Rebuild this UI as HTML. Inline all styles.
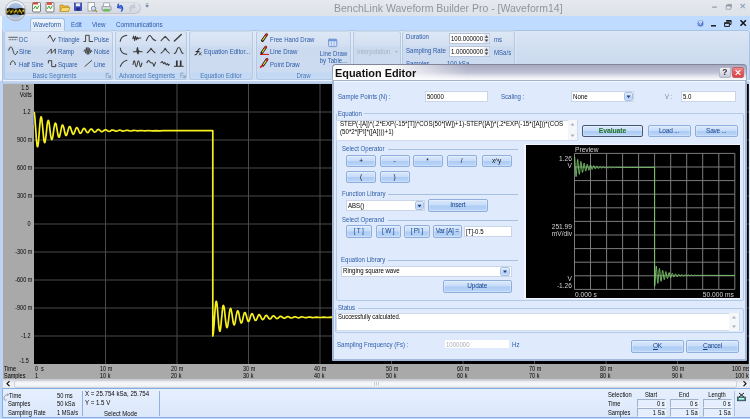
<!DOCTYPE html>
<html><head><meta charset="utf-8"><title>BenchLink Waveform Builder Pro</title>
<style>
html,body{margin:0;padding:0;background:#bfdbff;}
body{width:750px;height:419px;overflow:hidden;position:relative;font-family:"Liberation Sans",sans-serif;font-size:7.5px;color:#15428b;}
#app{position:absolute;left:0;top:0;width:750px;height:419px;overflow:hidden;filter:blur(.4px);}
.a{position:absolute;white-space:nowrap;line-height:1;}
.t{position:absolute;white-space:nowrap;line-height:9px;height:9px;}
.grp{position:absolute;top:31px;height:48.5px;border:1px solid #b4c9e4;border-radius:3px;background:linear-gradient(#dde7f5 0,#d3e0f2 13px,#cbdaef 16px,#cddcf0 40px,#c2d8f3 41px,#c4daf5 49px);box-sizing:border-box;box-shadow:0 0 0 1px rgba(255,255,255,.25);border-top-color:#c9d8ec;}
.gl{position:absolute;top:71.8px;height:8px;line-height:8px;font-size:6.6px;color:#4a78b8;text-align:center;white-space:nowrap;transform:scaleX(.92);transform-origin:50% 0;}
.ri{position:absolute;font-size:6.6px;line-height:9px;color:#2c5aa6;white-space:nowrap;transform:scaleX(.92);transform-origin:0 0;}
.btn{position:absolute;box-sizing:border-box;border:1px solid #90aedb;border-radius:2px;background:linear-gradient(#dbe9fc 0,#c6dcf9 48%,#adcbf4 52%,#bad5f7 100%);box-shadow:inset 0 0 0 .5px rgba(255,255,255,.5);text-align:center;color:#15428b;font-size:6.5px;letter-spacing:-.2px;}
.inp{position:absolute;box-sizing:border-box;border:1px solid #c9d6e8;background:#fff;color:#000;}
.it{position:absolute;font-size:6.6px;line-height:9px;color:#000;white-space:nowrap;transform:scaleX(.92);transform-origin:0 0;}
.dl{position:absolute;font-size:6.6px;line-height:9px;color:#2c5aa6;white-space:nowrap;transform:scaleX(.92);transform-origin:0 0;}
.hl{position:absolute;height:1px;background:#a8c0df;}
.ax{position:absolute;font-size:6.4px;line-height:8px;color:#000;white-space:nowrap;transform:scaleX(.86);transform-origin:0 0;}
.ax.b{transform:scaleX(.9);color:#0a0a0a;}
.ax.r{transform-origin:100% 0;text-align:right;}
.ax.c{transform-origin:50% 0;text-align:center;}
.pv{position:absolute;font-size:6.8px;line-height:8px;color:#d2d2d2;white-space:nowrap;transform:scaleX(.975);transform-origin:0 0;}
.pv.r{transform-origin:100% 0;text-align:right;}
</style></head><body><div id="app">

<!-- title bar -->
<div class="a" style="left:0;top:0;width:750px;height:16px;background:linear-gradient(#e6e9ee,#e0e4ea 60%,#dde2ea);"></div>
<!-- tab row -->
<div class="a" style="left:0;top:16px;width:750px;height:15px;background:#bfdbff;"></div>
<!-- ribbon body backdrop -->
<div class="a" style="left:0;top:30px;width:750px;height:54px;background:linear-gradient(#d8e5f6,#c6d9f1 48px,#bfd8fb 50px,#bcd5f5);"></div>
<div class="a" style="left:3px;top:30px;width:747px;height:51px;border:1px solid #a9c3e4;border-radius:3px;box-sizing:border-box;background:linear-gradient(#dbe6f5,#d2dff1 16px,#cbdaef 34px,#c7d9f1 50px);"></div>
<div class="a" style="left:0;top:16px;width:2px;height:403px;background:#f5f8fe;"></div>
<div class="a" style="left:748.6px;top:81px;width:1.4px;height:307px;background:#dbe7f8;z-index:5;"></div>
<!-- quick access toolbar pill -->
<div class="a" style="left:22px;top:1.5px;width:119px;height:12.5px;border-radius:0 7px 7px 0;background:linear-gradient(#e3e6ec,#d3d8e1);border:1px solid #c0c6d1;border-left:none;border-top-color:#d5d9e1;box-sizing:border-box;"></div>
<!-- orb -->
<svg class="a" style="left:3px;top:0" width="26" height="23" viewBox="3 0 26 23">
 <defs><linearGradient id="og" x1="0" y1="0" x2="0" y2="1"><stop offset="0" stop-color="#ffffff"/><stop offset=".5" stop-color="#eef0f4"/><stop offset="1" stop-color="#b9bfcc"/></linearGradient>
 <linearGradient id="og2" x1="0" y1="0" x2="0" y2="1"><stop offset="0" stop-color="#b4c8e6"/><stop offset=".5" stop-color="#8fabd6"/><stop offset="1" stop-color="#aac0e2"/></linearGradient></defs>
 <circle cx="15.5" cy="10.7" r="10.1" fill="url(#og)" stroke="#9da4b3" stroke-width=".8"/>
 <circle cx="15.5" cy="10.7" r="7.9" fill="url(#og2)" stroke="#c9d0dc" stroke-width=".5"/>
 <path d="M6.6 8.4 L11 8 L15.5 8.8 L20 8 L24.6 8.4 L24.6 14.4 L20 14.9 L15.5 14.2 L11 14.9 L6.6 14.4Z" fill="#14130c"/>
 <path d="M7.2 12.6 L9 10 L10.8 12.8 L12.6 10 L14.4 12.8 L16.2 10 L18 12.8 L19.8 10 L21.6 12.8 L23.4 10.2 L24.2 11.4" fill="none" stroke="#d9b818" stroke-width="1.3"/>
 <path d="M8 9 l2.5 4.5 M12 9 l2.5 4.5 M16.5 9 l2.5 4.5 M20.5 9 l2.5 4.5" stroke="#14130c" stroke-width="1.1" opacity=".75"/>
</svg>
<!-- quick access icons -->
<svg class="a" style="left:30px;top:1px" width="120" height="13" viewBox="0 0 120 13">
 <!-- new 1 -->
 <rect x="2.5" y="1.5" width="8" height="9.5" rx="1" fill="#fbfbf6" stroke="#6f6f6f" stroke-width=".9"/>
 <path d="M3.5 8 L5.5 5 L7 8 L9 4.5" stroke="#3aa23a" stroke-width="1" fill="none"/><rect x="3" y="1.5" width="5" height="2" fill="#d64a3a"/>
 <!-- new 2 -->
 <rect x="16" y="1.5" width="8" height="9.5" rx="1" fill="#fbfbf6" stroke="#6f6f6f" stroke-width=".9"/>
 <path d="M17 8 L19 5 L20.5 8 L22.5 4.5" stroke="#3aa23a" stroke-width="1" fill="none"/><rect x="17" y="1.5" width="5" height="2.4" fill="#e05040"/>
 <!-- open -->
 <path d="M30 4 L33 4 L34 5 L38.5 5 L38.5 10.5 L30 10.5Z" fill="#e9b93a" stroke="#b58718" stroke-width=".7"/><path d="M30 10.5 L32 6.5 L40 6.5 L38.5 10.5Z" fill="#f7d873" stroke="#b58718" stroke-width=".6"/>
 <!-- save -->
 <rect x="44.3" y="2" width="7.4" height="7.6" fill="#3a4cc0" stroke="#2a3494" stroke-width=".6"/><rect x="45.8" y="2.3" width="4.4" height="3" fill="#e8ecf8"/><rect x="46.4" y="6.6" width="3.4" height="3" fill="#232c86"/>
 <!-- print preview -->
 <rect x="58" y="1.5" width="6.5" height="8.5" fill="#fdfdfd" stroke="#8a8f98" stroke-width=".7"/><circle cx="63.5" cy="7.5" r="2.2" fill="#cfe3f5" stroke="#6b7785" stroke-width=".8"/><path d="M65 9 L67 11" stroke="#b9861f" stroke-width="1.3"/>
 <!-- print -->
 <rect x="72" y="5" width="9" height="4.5" rx="1" fill="#d3d6db" stroke="#7b818c" stroke-width=".7"/><rect x="73.7" y="2" width="5.6" height="3.4" fill="#fff" stroke="#8a8f98" stroke-width=".6"/><rect x="73.5" y="8" width="6" height="2.6" fill="#6fbf58"/>
 <!-- undo -->
 <path d="M91.5 10 Q93.8 7 91 4.6 L88 6.2 M88.4 3.2 L87.8 6.5 L91 7" stroke="#2d56c8" stroke-width="1.5" fill="none" stroke-linecap="round"/>
 <!-- redo (disabled) -->
 <path d="M101 10 Q98.8 7 101.6 4.6 L104.4 6.2 M104 3.2 L104.7 6.5 L101.6 7" stroke="#c2c7d0" stroke-width="1.4" fill="none" stroke-linecap="round"/>
 <!-- customize -->
 <path d="M115.8 2.8 h2.6 M115.8 4.6 h2.6 l-1.3 1.6z" stroke="#6a7f9c" stroke-width=".7" fill="#6a7f9c"/>
</svg>
<!-- title -->
<div class="a" style="left:334px;top:2px;font-size:10.5px;line-height:12px;color:#92959d;">BenchLink Waveform Builder Pro - [Waveform14]</div>
<!-- window controls (title) -->
<svg class="a" style="left:706px;top:1px" width="44" height="13" viewBox="0 0 44 13">
 <path d="M6.2 6.1 h4.6" stroke="#8a909c" stroke-width="1.1"/>
 <path d="M20.2 4.6 h4.6 v3.6 h-4.6z" stroke="#979eac" stroke-width=".9" fill="#e9ecf1"/><path d="M20.2 4.5 h4.6" stroke="#8a909c" stroke-width="1.6"/><path d="M21.6 3.4 h3.9 v3" stroke="#979eac" stroke-width=".9" fill="none"/>
 <path d="M34.6 3 l4.2 4.2 M38.8 3 l-4.2 4.2" stroke="#94a6c2" stroke-width="1.2"/>
</svg>
<!-- tab row controls -->
<svg class="a" style="left:694px;top:17px" width="56" height="13" viewBox="0 0 56 13">
 <defs><radialGradient id="hg" cx="40%" cy="35%" r="70%"><stop offset="0" stop-color="#9cc0ff"/><stop offset="1" stop-color="#1f4fc0"/></radialGradient></defs>
 <circle cx="6.4" cy="6.4" r="3.3" fill="url(#hg)" stroke="#c6d4ea" stroke-width=".8"/>
 <text x="6.4" y="8.3" font-family="Liberation Sans, sans-serif" font-weight="bold" font-size="5.4" fill="#fff" text-anchor="middle">?</text>
 <path d="M17 8.8 h5" stroke="#1c1c1c" stroke-width="1.5"/>
 <path d="M30.6 6 h4.8 v3.4 h-4.8z" stroke="#1c1c1c" stroke-width="1" fill="none"/><path d="M30.4 6 h5.2 M32.2 3.8 h5.2" stroke="#1c1c1c" stroke-width="1.7"/><path d="M37 4 v3.4 h-1.4" stroke="#1c1c1c" stroke-width="1" fill="none"/>
 <path d="M46.5 3.2 l5.4 5.6 M51.9 3.2 l-5.4 5.6" stroke="#111" stroke-width="1.5"/>
</svg>
<!-- tabs -->
<div class="a" style="left:29.7px;top:17.6px;width:35.5px;height:13.4px;border:1px solid #a4bfe2;border-bottom:none;border-radius:3px 3px 0 0;box-sizing:border-box;background:linear-gradient(#f1f6fd,#dbe6f5);"></div>
<div class="ri" style="left:33px;top:19.5px;font-size:6.8px;">Waveform</div>
<div class="ri" style="left:71px;top:19.5px;font-size:6.8px;">Edit</div>
<div class="ri" style="left:92px;top:19.5px;font-size:6.8px;">View</div>
<div class="ri" style="left:116px;top:19.5px;font-size:6.8px;">Communications</div>

<!-- ribbon groups -->
<div class="grp" style="left:4px;width:109px;"></div>
<div class="grp" style="left:115px;width:72px;"></div>
<div class="grp" style="left:189px;width:64px;"></div>
<div class="grp" style="left:256px;width:95px;"></div>
<div class="grp" style="left:353px;width:48px;"></div>
<div class="grp" style="left:402px;width:113px;"></div>
<div class="gl" style="left:4px;width:101px;">Basic Segments</div>
<div class="gl" style="left:115px;width:64px;">Advanced Segments</div>
<div class="gl" style="left:189px;width:64px;">Equation Editor</div>
<div class="gl" style="left:256px;width:95px;">Draw</div>
<!-- basic segment labels -->
<div class="ri" style="left:19px;top:34.5px;">DC</div>
<div class="ri" style="left:19px;top:47px;">Sine</div>
<div class="ri" style="left:18.5px;top:59.5px;">Half Sine</div>
<div class="ri" style="left:58px;top:34.5px;">Triangle</div>
<div class="ri" style="left:58px;top:47px;">Ramp</div>
<div class="ri" style="left:58px;top:59.5px;">Square</div>
<div class="ri" style="left:94px;top:34.5px;">Pulse</div>
<div class="ri" style="left:94px;top:47px;">Noise</div>
<div class="ri" style="left:94px;top:59.5px;">Line</div>
<div class="ri" style="left:203.5px;top:47px;">Equation Editor...</div>
<div class="ri" style="left:269.5px;top:34.5px;">Free Hand Draw</div>
<div class="ri" style="left:269.5px;top:47px;">Line Draw</div>
<div class="ri" style="left:269.5px;top:59.5px;">Point Draw</div>
<div class="ri" style="left:313.8px;top:51.2px;width:39px;text-align:center;line-height:6.4px;white-space:nowrap;transform-origin:50% 0;">Line Draw<br>by Table...</div>
<div class="ri" style="left:356.5px;top:47px;color:#a9b2c0;">Interpolation</div>
<div class="ri" style="left:406px;top:32px;">Duration</div>
<div class="ri" style="left:406px;top:46px;">Sampling Rate</div>
<div class="ri" style="left:406px;top:58.5px;">Samples</div>
<div class="ri" style="left:447px;top:58.5px;">100 kSa</div>
<div class="ri" style="left:494px;top:34.5px;">ms</div>
<div class="ri" style="left:494px;top:47.5px;">MSa/s</div>
<div class="inp" style="left:449px;top:33px;width:41px;height:10.5px;border-color:#b7c6da;"></div>
<div class="inp" style="left:449px;top:46px;width:41px;height:10.5px;border-color:#b7c6da;"></div>
<div class="it" style="left:450.5px;top:33.8px;">100.000000</div>
<div class="it" style="left:450.5px;top:46.8px;">1.00000000</div>
<!-- ribbon icons -->
<svg class="a" style="left:0;top:30px" width="750" height="52" viewBox="0 30 750 52" fill="none" stroke="#3a3a3a" stroke-width="1" stroke-linecap="round" stroke-linejoin="round">
 <!-- DC -->
 <path d="M8.8 37.3 h8.6" stroke-width=".8"/><path d="M8.8 39.7 h8.6" stroke-width=".9" stroke-dasharray=".9 .7" stroke-linecap="butt"/>
 <!-- Sine -->
 <path d="M8.8 50.2 C9.8 45.6 11.8 45.6 13 50.6 S16.2 56 17.5 51.4" stroke-width=".95"/>
 <!-- Half sine -->
 <path d="M10.3 64.6 C10.8 59.6 14.8 59.6 15.4 64.6" stroke-width=".95"/>
 <!-- Triangle -->
 <path d="M48 38 l2-3 3.4 6.6 1.9-3.4" stroke-width=".95"/>
 <!-- Ramp -->
 <path d="M47.3 53.4 l4-4.5 v4.5 l4-4.5 v4.5" stroke-width=".95"/>
 <!-- Square -->
 <path d="M48.4 63 v-2.3 h3.3 v5.9 h4 v-2.2" stroke-width=".95" stroke-linejoin="miter"/>
 <!-- Pulse -->
 <path d="M83.9 41.5 h1.7 v-6.2 h3.6 v6.2 h3.4" stroke-width=".95" stroke-linejoin="miter"/>
 <!-- Noise -->
 <path d="M84 51.2 l.9 -1.6 .7 3.6 .8 -5.6 .8 6.8 .8 -7 .8 7 .8 -6 .8 4.5 .8 -2.7 .6 1.2" stroke-width=".85" stroke-linejoin="miter"/>
 <!-- Line -->
 <path d="M84.9 66.4 l6.8 -5.9" stroke-width=".9"/>
 <!-- launcher icons -->
 <g stroke="#7a8fae" stroke-width=".7"><path d="M108.4 73.4 h-2.2 v4 M110.4 75.4 v2.2 h-2.2 M107.8 75 l2.2 2.2"/><path d="M183 73 h-2.2 v4.2 M185.2 75.2 v2.2 h-2.2 M182.6 74.8 l2.2 2.2"/></g>
 <!-- Advanced grid row1 -->
 <g stroke="#3c3c3c" stroke-width="1.05">
 <path d="M120.2 41.3 Q121 36.2 126.8 35.3"/>
 <path d="M132.8 38.6 l.9-2.6 .9 4.6 .9-4.4 .9 3.6 .9-2.6 .8 1.8 .8-1 h2"/>
 <path d="M146.3 40.6 Q148.6 35.2 149.8 35.6 Q151 36 152.4 38.4 Q153.8 40.3 155.7 40.6"/>
 <path d="M161.1 40.6 L165.2 36.3 L169.2 40.6"/>
 <path d="M174.4 41 L181.3 34.4" stroke-width="1.4"/>
 <!-- row2 -->
 <path d="M120.3 48 Q120.8 53.8 126.9 54.3"/>
 <path d="M133.4 51.8 h2.8 l.7-1.2 .6-3 .6 6.4 .7-3.4 .7 1.2 h2.7"/><path d="M137.5 48.5 v4.5" stroke-width="1.4"/>
 <path d="M147.2 52.8 Q149.8 51.2 151 48.3 Q152.4 51.2 155 52.8"/>
 <path d="M161.1 53.1 Q164 51.2 165.2 48.2 Q166.5 51.2 169.2 53.1"/>
 <path d="M174.3 53.5 Q176 53.5 176.8 50.2 Q177.6 47.4 178.8 47.4 Q180 47.4 180.8 50.2 Q181.6 53.5 183.1 53.5"/>
 <!-- row3 -->
 <path d="M120.3 66.5 Q122.2 61.5 126.9 60.2"/>
 <path d="M133.1 64.5 Q134 57.5 135.2 63.5 Q136.3 70 137.4 63.5 Q138.4 57.8 139.5 63.5 Q140.5 69.5 141.5 64.5 L141.9 63"/>
 <path d="M146.9 62.8 Q148.2 59.2 149.6 61.6 L151 63 Q152.6 62 153.3 64.6 L153.9 66.2 L155.6 62.4"/>
 <path d="M160.9 62.6 L162.3 61.5 L163.6 63.8 L164.9 62.4 L166.2 64.8 L167.5 63.6 L168.4 65.4 L169.2 64.4"/>
 <path d="M174.3 66.3 h8.9" stroke-width="1" stroke="#333"/><path d="M176.8 66 v-5.6 M180.7 66 v-5.6" stroke-width="1.7" stroke="#333" stroke-linecap="butt"/>
 </g>
 <!-- fx icon -->
 <path d="M195 55 q2 .5 2.5-3 q.5-4 2.5-3.5 M196 51.5 h3" stroke="#222" stroke-width="1"/><path d="M199 52.5 l2.2 2.5 M201.2 52.5 l-2.2 2.5" stroke="#222" stroke-width=".7"/>
 <!-- pencils -->
 <g stroke-linecap="round">
  <path d="M262.4 40.6 L266.5 34.7" stroke="#1c1c1c" stroke-width="2.8"/><path d="M262.8 40 L265.6 36" stroke="#e8d43a" stroke-width="1.3"/><path d="M265.9 35.5 L266.6 34.5" stroke="#d02828" stroke-width="2"/>
  <path d="M260 54.4 H269" stroke="#e01818" stroke-width="1.1" stroke-linecap="butt"/>
  <path d="M261.8 52.8 L265.7 47.2" stroke="#1c1c1c" stroke-width="2.8"/><path d="M262.3 52.1 L264.9 48.4" stroke="#e8d43a" stroke-width="1.1"/><path d="M265.2 47.9 L265.9 46.9" stroke="#d02828" stroke-width="2"/>
  <path d="M263 65.2 L267 59.4" stroke="#1c1c1c" stroke-width="2.8"/><path d="M263.5 64.5 L266.2 60.6" stroke="#e8d43a" stroke-width="1.3"/><path d="M266.5 60.1 L267.2 59.1" stroke="#d02828" stroke-width="2"/>
  <path d="M260.6 67.2 L262.6 65.4" stroke="#e01818" stroke-width="1.6"/>
 </g>
 <!-- table icon -->
 <rect x="328.6" y="39.2" width="8.2" height="7.4" rx=".8" fill="#d4e4fa" stroke="#6a90cc" stroke-width=".9"/><rect x="328.6" y="39.2" width="8.2" height="2" fill="#6c97da" stroke="none"/><path d="M331.4 41 v5.5 M334.1 41 v5.5" stroke="#86a8de" stroke-width=".7"/>
 <!-- interpolation arrow -->
 <path d="M395 51 h3 l-1.5 1.8z" fill="#a9b2c0" stroke="none"/>
 <!-- spin buttons -->
 <g stroke="none"><rect x="483.5" y="34" width="6" height="9" rx="1.5" fill="#e4e8ee"/><rect x="483.5" y="47" width="6" height="9" rx="1.5" fill="#e4e8ee"/>
 <path d="M484.7 37.7 l1.8-2.4 1.8 2.4z M484.7 39.5 l1.8 2.4 1.8-2.4z M484.7 50.7 l1.8-2.4 1.8 2.4z M484.7 52.5 l1.8 2.4 1.8-2.4z" fill="#444"/></g>
</svg>

<!-- plot area -->
<div class="a" style="left:0;top:79.8px;width:750px;height:1.2px;background:#e9f1fc;"></div><div class="a" style="left:0;top:81px;width:750px;height:3px;background:linear-gradient(#c6daf6,#b4c6e0);"></div><div class="a" style="left:2px;top:30px;width:1.2px;height:54px;background:#a5c4ee;"></div>
<div class="a" style="left:0;top:83px;width:3px;height:336px;background:#bed3f1;"></div>
<div class="a" style="left:3px;top:83.5px;width:747px;height:296px;background:#aaa9a9;"></div>
<div class="a" style="left:34px;top:84px;width:716px;height:280px;background:#000;"></div>
<svg class="a" style="left:0;top:84px" width="750" height="281" viewBox="0 84 750 281" fill="none">
<path d="M105.5 84 V364 M177.0 84 V364 M248.5 84 V364 M320.0 84 V364 M391.5 84 V364 M463.0 84 V364 M534.5 84 V364 M606.0 84 V364 M677.5 84 V364 M749.0 84 V364 M34 112.0 H750 M34 140.0 H750 M34 168.0 H750 M34 196.0 H750 M34 224.0 H750 M34 252.0 H750 M34 280.0 H750 M34 308.0 H750 M34 336.0 H750" stroke="#4a4a4a" stroke-width="1"/>
<path d="M33.8 112 V125" stroke="#5a6ae0" stroke-width="1.2"/>
<path d="M34.0 112.0L34.2 112.4L34.4 113.2L34.5 114.4L34.7 116.0L34.9 118.0L35.1 120.2L35.3 123.9L36.1 134.7L36.3 138.4L36.5 140.5L36.7 142.5L36.9 144.1L37.0 145.3L37.2 146.2L37.4 146.7L37.6 146.7L37.8 146.4L37.9 145.7L38.1 144.7L38.3 143.3L38.5 141.6L38.7 138.7L39.1 134.2L39.6 127.2L39.9 124.1L40.2 121.3L40.3 119.8L40.5 118.6L40.7 117.7L40.9 117.1L41.1 116.8L41.2 116.9L41.4 117.4L41.6 118.1L41.8 119.2L42.0 120.5L42.2 122.9L42.6 126.6L43.2 133.6L43.5 136.4L43.7 138.7L43.9 140.0L44.1 141.1L44.3 141.9L44.5 142.4L44.6 142.6L44.8 142.5L45.0 142.1L45.2 141.5L45.4 140.0L45.7 138.1L46.0 135.8L46.9 127.3L47.1 125.1L47.4 123.1L47.7 121.7L47.9 121.0L48.0 120.6L48.2 120.4L48.4 120.5L48.6 120.8L48.8 121.7L49.1 123.1L49.4 124.9L49.7 127.7L50.4 133.6L50.7 135.5L51.0 137.1L51.2 138.4L51.5 139.2L51.8 139.5L52.1 139.3L52.3 138.7L52.6 137.6L52.9 136.2L53.2 133.9L54.0 128.2L54.4 126.0L54.6 124.7L54.9 123.8L55.2 123.2L55.5 123.1L55.7 123.4L56.0 124.1L56.3 125.1L56.6 126.9L57.7 133.3L58.0 135.1L58.3 136.1L58.6 136.8L58.8 137.2L59.1 137.2L59.4 136.8L59.7 136.1L60.0 134.7L60.5 132.6L61.3 128.4L61.6 126.9L62.0 125.7L62.2 125.2L62.5 125.0L62.8 125.2L63.0 125.6L63.4 126.5L63.9 128.2L64.8 132.6L65.2 133.9L65.5 134.9L65.9 135.4L66.3 135.5L66.6 135.1L67.0 134.2L67.4 132.8L68.4 129.0L68.9 127.6L69.2 126.9L69.6 126.5L69.9 126.6L70.3 127.0L70.7 128.1L71.4 130.4L72.1 132.4L72.5 133.5L72.9 134.0L73.2 134.3L73.6 134.1L74.0 133.5L74.6 132.2L75.6 129.2L76.1 128.2L76.5 127.7L77.0 127.6L77.4 128.0L78.0 128.9L79.3 132.1L79.8 133.0L80.3 133.3L80.7 133.2L81.2 132.8L81.8 131.6L82.9 129.4L83.4 128.7L83.9 128.4L84.3 128.5L84.9 129.0L85.7 130.3L86.6 131.9L87.1 132.5L87.6 132.6L88.2 132.4L88.9 131.5L90.1 129.6L90.8 129.1L91.3 129.0L91.9 129.3L92.8 130.4L93.8 131.7L94.4 132.1L95.0 132.1L95.8 131.6L97.4 129.8L98.1 129.4L98.7 129.5L99.5 130.0L100.9 131.4L101.7 131.7L102.4 131.6L103.4 131.0L104.6 130.0L105.4 129.7L106.2 129.9L108.3 131.3L109.1 131.5L110.0 131.2L111.8 130.1L112.7 130.0L113.8 130.3L115.5 131.2L116.5 131.2L117.8 130.8L119.3 130.2L120.3 130.2L122.8 131.1L124.0 131.0L126.5 130.3L127.8 130.4L130.1 131.0L131.5 130.9L133.7 130.4L135.4 130.5L137.5 130.9L139.5 130.7L141.3 130.5L144.9 130.8L148.6 130.5L152.2 130.8L155.9 130.6L159.6 130.8L163.3 130.6L167.1 130.7L170.9 130.6L174.9 130.7L179.1 130.7L212.8 130.7L212.8 336.0L212.9 335.6L213.1 334.8L213.3 333.6L213.5 332.0L213.6 330.0L213.8 327.8L214.1 324.1L214.8 313.3L215.1 309.6L215.3 307.5L215.4 305.5L215.6 303.9L215.8 302.7L216.0 301.8L216.1 301.3L216.3 301.3L216.5 301.6L216.7 302.3L216.9 303.3L217.0 304.7L217.2 306.4L217.5 309.3L217.8 313.8L218.4 320.8L218.6 323.9L218.9 326.7L219.1 328.2L219.3 329.4L219.5 330.3L219.6 330.9L219.8 331.2L220.0 331.1L220.2 330.6L220.3 329.9L220.5 328.8L220.7 327.5L221.0 325.1L221.3 321.4L222.0 314.4L222.2 311.6L222.5 309.3L222.7 308.0L222.8 306.9L223.0 306.1L223.2 305.6L223.4 305.4L223.6 305.5L223.7 305.9L223.9 306.5L224.2 308.0L224.5 309.9L224.7 312.2L225.6 320.7L225.9 322.9L226.2 324.9L226.4 326.3L226.6 327.0L226.8 327.4L227.0 327.6L227.1 327.5L227.3 327.2L227.6 326.3L227.9 324.9L228.1 323.1L228.5 320.3L229.2 314.4L229.5 312.5L229.7 310.9L230.0 309.6L230.3 308.8L230.5 308.5L230.8 308.7L231.1 309.3L231.3 310.4L231.6 311.8L232.0 314.1L232.8 319.8L233.1 322.0L233.4 323.3L233.7 324.2L233.9 324.8L234.2 324.9L234.5 324.6L234.7 323.9L235.0 322.9L235.4 321.1L236.4 314.7L236.8 312.9L237.1 311.9L237.3 311.2L237.6 310.8L237.9 310.8L238.1 311.2L238.4 311.9L238.8 313.3L239.2 315.4L240.0 319.6L240.4 321.1L240.7 322.3L241.0 322.8L241.3 323.0L241.5 322.8L241.8 322.4L242.2 321.5L242.6 319.8L243.6 315.4L243.9 314.1L244.3 313.1L244.7 312.6L245.0 312.5L245.4 312.9L245.7 313.8L246.2 315.2L247.2 319.0L247.6 320.4L248.0 321.1L248.3 321.5L248.7 321.4L249.0 321.0L249.5 319.9L250.2 317.6L250.8 315.6L251.3 314.5L251.6 314.0L252.0 313.7L252.3 313.9L252.8 314.5L253.3 315.8L254.4 318.8L254.8 319.8L255.3 320.3L255.7 320.4L256.2 320.0L256.7 319.1L258.1 315.9L258.6 315.0L259.0 314.7L259.5 314.8L259.9 315.2L260.6 316.4L261.6 318.6L262.2 319.3L262.6 319.6L263.1 319.5L263.6 319.0L264.4 317.7L265.3 316.1L265.8 315.5L266.4 315.4L266.9 315.6L267.6 316.5L268.9 318.4L269.5 318.9L270.0 319.0L270.7 318.7L271.6 317.6L272.5 316.3L273.2 315.9L273.8 315.9L274.5 316.4L276.1 318.2L276.8 318.6L277.5 318.5L278.3 318.0L279.7 316.6L280.4 316.3L281.1 316.4L282.1 317.0L283.4 318.0L284.2 318.3L285.0 318.1L287.0 316.7L287.8 316.5L288.7 316.8L290.6 317.9L291.5 318.0L292.6 317.7L294.3 316.8L295.2 316.8L296.6 317.2L298.0 317.8L299.1 317.8L301.6 316.9L302.8 317.0L305.3 317.7L306.5 317.6L308.8 317.0L310.3 317.1L312.5 317.6L314.1 317.5L316.2 317.1L318.2 317.3L320.1 317.5L323.7 317.2L327.3 317.5L331.0 317.2L334.7 317.4L338.3 317.2L342.1 317.4L345.8 317.3L349.7 317.4L353.6 317.3L357.8 317.3L391.5 317.3" stroke="#f6f01c" stroke-width="1.7" stroke-linejoin="round"/>
</svg>
<div class="ax r" style="left:3px;width:25.8px;top:83.8px;">1.5</div>
<div class="ax r" style="left:3px;width:27.6px;top:108.0px;">1.2</div>
<div class="ax r" style="left:3px;width:29.3px;top:136.0px;">900 m</div>
<div class="ax r" style="left:3px;width:29.3px;top:164.0px;">600 m</div>
<div class="ax r" style="left:3px;width:29.3px;top:192.0px;">300 m</div>
<div class="ax r" style="left:3px;width:27.6px;top:220.0px;">0</div>
<div class="ax r" style="left:3px;width:29.3px;top:248.0px;">-300 m</div>
<div class="ax r" style="left:3px;width:29.3px;top:276.0px;">-600 m</div>
<div class="ax r" style="left:3px;width:29.3px;top:304.0px;">-900 m</div>
<div class="ax r" style="left:3px;width:27.6px;top:332.0px;">-1.2</div>
<div class="ax r" style="left:3px;width:25.8px;top:357.0px;">-1.5</div>
<div class="ax r" style="left:3px;width:28.7px;top:90.8px;">Volts</div>
<div class="ax" style="left:3.5px;top:364.5px;">Time</div>
<div class="ax" style="left:3.5px;top:371.5px;">Samples</div>
<div class="ax" style="left:34.5px;top:364.5px;white-space:pre;">0  s</div>
<div class="ax" style="left:34.5px;top:371.5px;">1</div>
<div class="ax" style="left:99.8px;top:364.5px;">10 m</div>
<div class="ax" style="left:99.8px;top:371.5px;">10 k</div>
<div class="ax" style="left:171.3px;top:364.5px;">20 m</div>
<div class="ax" style="left:171.3px;top:371.5px;">20 k</div>
<div class="ax" style="left:242.8px;top:364.5px;">30 m</div>
<div class="ax" style="left:242.8px;top:371.5px;">30 k</div>
<div class="ax" style="left:314.3px;top:364.5px;">40 m</div>
<div class="ax" style="left:314.3px;top:371.5px;">40 k</div>
<div class="ax" style="left:385.8px;top:364.5px;">50 m</div>
<div class="ax" style="left:385.8px;top:371.5px;">50 k</div>
<div class="ax" style="left:457.3px;top:364.5px;">60 m</div>
<div class="ax" style="left:457.3px;top:371.5px;">60 k</div>
<div class="ax" style="left:528.8px;top:364.5px;">70 m</div>
<div class="ax" style="left:528.8px;top:371.5px;">70 k</div>
<div class="ax" style="left:600.3px;top:364.5px;">80 m</div>
<div class="ax" style="left:600.3px;top:371.5px;">80 k</div>
<div class="ax" style="left:671.8px;top:364.5px;">90 m</div>
<div class="ax" style="left:671.8px;top:371.5px;">90 k</div>
<div class="ax r" style="right:0.5px;top:364.5px;">100 ms</div>
<div class="ax r" style="right:1.5px;top:371.5px;">100 k</div>

<!-- h scrollbar -->
<div class="a" style="left:3px;top:379px;width:747px;height:9.5px;background:linear-gradient(#c4c7ce 0,#dfe2e8 18%,#f4f5f8 50%,#e6e9ee 85%,#d5dae3 100%);"></div>
<div class="a" style="left:14px;top:380.2px;width:723px;height:7.6px;background:linear-gradient(#e6e8ed 0,#f8f9fb 45%,#e9ecf1 100%);border:1px solid #cdd2db;border-radius:2px;box-sizing:border-box;"></div>
<svg class="a" style="left:3px;top:379px" width="747" height="10" viewBox="0 0 747 10" fill="none" stroke="#111" stroke-width="1.2">
 <path d="M6.5 2.2 L4 4.7 L6.5 7.2"/><path d="M740.5 2.2 L743 4.7 L740.5 7.2"/>
 <path d="M371.5 3 v3.5 M373.5 3 v3.5 M375.5 3 v3.5" stroke="#aab3c2" stroke-width=".6"/>
</svg>
<!-- bottom info panel -->
<div class="a" style="left:0;top:388.5px;width:750px;height:31px;background:#bfdbff;"></div>
<div class="a" style="left:2px;top:388.2px;width:748.5px;height:30.2px;background:linear-gradient(#e6effd,#dbe8fb);border:1.2px solid #86ade2;border-radius:1px;box-sizing:border-box;"></div>
<div class="a" style="left:82px;top:391px;width:1px;height:25px;background:#8db2e3;"></div>
<div class="a" style="left:159px;top:391px;width:1px;height:25px;background:#8db2e3;"></div>
<div class="a" style="left:734px;top:391px;width:1px;height:25px;background:#a9c3e6;"></div>
<div class="ax b" style="left:8.5px;top:392px;">Time</div>
<div class="ax b" style="left:8px;top:399.5px;">Samples</div>
<div class="ax b" style="left:8px;top:409px;">Sampling Rate</div>
<div class="ax b" style="left:56.5px;top:392px;">50 ms</div>
<div class="ax b" style="left:56.5px;top:399.5px;">50 kSa</div>
<div class="ax b" style="left:56.5px;top:409px;">1 MSa/s</div>
<div class="ax b" style="left:85px;top:390.3px;font-size:6.8px;">X =  25.754 kSa, 25.754</div>
<div class="ax b" style="left:85px;top:398.9px;font-size:6.8px;">Y =  1.5 V</div>
<div class="ax b" style="left:104px;top:409.7px;font-size:6.65px;">Select Mode</div>
<svg class="a" style="left:2px;top:393px" width="9" height="10" viewBox="0 0 9 10" fill="none" stroke="#8a8f98" stroke-width=".8"><path d="M6.5 1.5 Q1.5 2 2 6 Q2.5 8 4.5 7 M6.5 1.5 L4.8 1 M6.5 1.5 L5.5 3"/></svg>
<!-- selection table -->
<div class="ax b" style="left:608px;top:391px;">Selection</div>
<div class="ax b" style="left:608px;top:399.5px;">Time</div>
<div class="ax b" style="left:608px;top:408.5px;">Samples</div>
<div class="ax c b" style="left:637px;width:28px;top:391px;">Start</div>
<div class="ax c b" style="left:670px;width:28px;top:391px;">End</div>
<div class="ax c b" style="left:703px;width:28px;top:391px;">Length</div>
<div class="a" style="left:636.5px;top:399px;width:29px;height:8.5px;border:1px solid #a3b1c6;border-right-color:#f2f6fc;border-bottom-color:#f2f6fc;box-sizing:border-box;background:#e4eefc;"></div>
<div class="a" style="left:669.5px;top:399px;width:29px;height:8.5px;border:1px solid #a3b1c6;border-right-color:#f2f6fc;border-bottom-color:#f2f6fc;box-sizing:border-box;background:#e4eefc;"></div>
<div class="a" style="left:702.5px;top:399px;width:29px;height:8.5px;border:1px solid #a3b1c6;border-right-color:#f2f6fc;border-bottom-color:#f2f6fc;box-sizing:border-box;background:#e4eefc;"></div>
<div class="a" style="left:636.5px;top:408px;width:29px;height:8.5px;border:1px solid #a3b1c6;border-right-color:#f2f6fc;border-bottom-color:#f2f6fc;box-sizing:border-box;background:#e4eefc;"></div>
<div class="a" style="left:669.5px;top:408px;width:29px;height:8.5px;border:1px solid #a3b1c6;border-right-color:#f2f6fc;border-bottom-color:#f2f6fc;box-sizing:border-box;background:#e4eefc;"></div>
<div class="a" style="left:702.5px;top:408px;width:29px;height:8.5px;border:1px solid #a3b1c6;border-right-color:#f2f6fc;border-bottom-color:#f2f6fc;box-sizing:border-box;background:#e4eefc;"></div>
<div class="ax r b" style="left:637px;width:27.6px;top:399.5px;">0 s</div>
<div class="ax r b" style="left:670px;width:27.6px;top:399.5px;">0 s</div>
<div class="ax r b" style="left:703px;width:27.6px;top:399.5px;">0 s</div>
<div class="ax r b" style="left:637px;width:27.6px;top:408.5px;">1 Sa</div>
<div class="ax r b" style="left:670px;width:27.6px;top:408.5px;">1 Sa</div>
<div class="ax r b" style="left:703px;width:27.6px;top:408.5px;">1 Sa</div>
<svg class="a" style="left:736px;top:392px" width="11" height="10" viewBox="0 0 11 10"><path d="M3 1 l5 4 M8 1 l-5 4" stroke="#222" stroke-width="1"/><rect x="1.5" y="5" width="8" height="3.8" fill="#4a9a8a" stroke="#234" stroke-width=".7"/><rect x="3" y="6" width="5" height="1.5" fill="#cfe"/></svg>

<!-- dialog -->
<div class="a" style="left:331.6px;top:63.6px;width:415.2px;height:297.6px;background:linear-gradient(#7d8296 0,#8d93aa 2px,#a6b6d3 18px,#a3b9dc 100%);border-radius:4px 4px 1px 1px;"></div>
<div class="a" style="left:332.6px;top:64.6px;width:413.2px;height:15.6px;border-radius:3px 3px 0 0;background:linear-gradient(to right,rgba(255,255,255,.96) 0,rgba(255,255,255,.92) 60px,rgba(255,255,255,0) 135px),linear-gradient(#a7a9bf 0,#b0b2c8 20%,#bfc1d4 50%,#e4e5ee 75%,#fcfcfe 100%);"></div>
<div class="a" style="left:333.8px;top:80.6px;width:410.8px;height:278.2px;background:#dfebfd;border-top:1px solid #f6f9fe;box-sizing:border-box;"></div>
<div class="a" style="left:335.4px;top:65.8px;font-size:11.6px;line-height:14px;font-weight:bold;color:#111;transform:scaleX(.94);transform-origin:0 0;">Equation Editor</div>
<div class="a" style="left:718.8px;top:67.3px;width:12px;height:11px;border:1px solid #b4b7c8;border-radius:2px;box-sizing:border-box;background:linear-gradient(#f1f1f6,#c6c8da);"></div>
<div class="a" style="left:722.3px;top:68.3px;font-size:8.5px;line-height:9px;font-weight:bold;color:#333;">?</div>
<div class="a" style="left:732px;top:67.3px;width:12px;height:11px;border:1px solid #c8626a;border-radius:2px;box-sizing:border-box;background:linear-gradient(#ee8c8c,#e25858 50%,#d94646);"></div>
<svg class="a" style="left:732px;top:67.3px" width="12" height="11" viewBox="0 0 12 11"><path d="M3.6 3.1 l4.8 4.8 M8.4 3.1 l-4.8 4.8" stroke="#fff" stroke-width="1.2"/></svg>
<div class="dl" style="left:337.5px;top:92px;">Sample Points (N) :</div>
<div class="inp" style="left:425px;top:90.5px;width:63px;height:11px;"></div>
<div class="it" style="left:427px;top:91.7px;">50000</div>
<div class="dl" style="left:501px;top:92px;">Scaling :</div>
<div class="inp" style="left:571px;top:90.5px;width:62.5px;height:11.5px;"></div>
<div class="it" style="left:573px;top:91.7px;">None</div>
<div class="btn" style="left:623.5px;top:91.5px;width:9.5px;height:9.5px;border-color:#a9c0e2;"></div>
<div class="dl" style="left:665px;top:92px;color:#7487a8;">V :</div>
<div class="inp" style="left:681px;top:90.5px;width:54.5px;height:11px;"></div>
<div class="it" style="left:683px;top:91.7px;">5.0</div>
<div class="a" style="left:335.5px;top:113px;width:408px;height:188px;border:1px solid #b3c9e6;border-radius:2px;box-sizing:border-box;"></div>
<div class="dl" style="left:337px;top:108.5px;background:#dfebfd;padding:0 2px 0 1px;">Equation</div>
<div class="inp" style="left:336px;top:119.5px;width:242px;height:21px;border-color:#cfdaea;"></div>
<div class="a" style="left:339.6px;top:120px;font-size:6.6px;line-height:7.5px;color:#000;white-space:nowrap;transform:scaleX(.935);transform-origin:0 0;">STEP(-[A])*(.2*EXP(-15*[T])*COS(50*[W])+1)-STEP([A])*(.2*EXP(-15*([A]))*(COS<br>(50*2*[PI]*([A])))+1)</div>
<svg class="a" style="left:568px;top:120px" width="9" height="20" viewBox="0 0 9 20"><rect x="0" y="0" width="9" height="20" fill="#f4f6fa"/><path d="M2.5 5.5 l2-2.5 2 2.5z M2.5 14.5 l2 2.5 2-2.5z" fill="#a8aeb8"/></svg>
<div class="btn" style="left:582px;top:124.5px;width:61px;height:12px;border:1.5px solid #475778;line-height:9px;color:#1a6e24;font-weight:bold;font-size:6.9px;letter-spacing:-.1px;">Evaluate</div>
<div class="btn" style="left:647.5px;top:124.5px;width:43px;height:12px;line-height:10px;">Load ...</div>
<div class="btn" style="left:694.5px;top:124.5px;width:43.5px;height:12px;line-height:10px;">Save ...</div>
<div class="dl" style="left:342px;top:144px;">Select Operator</div>
<div class="hl" style="left:388px;top:149px;width:130px;"></div>
<div class="btn" style="left:346.0px;top:154.5px;width:30px;height:12.5px;line-height:10.5px;color:#111;">+</div>
<div class="btn" style="left:379.5px;top:154.5px;width:30px;height:12.5px;line-height:10.5px;color:#111;">-</div>
<div class="btn" style="left:412.5px;top:154.5px;width:30px;height:12.5px;line-height:10.5px;color:#111;">*</div>
<div class="btn" style="left:446.5px;top:154.5px;width:30px;height:12.5px;line-height:10.5px;color:#111;">/</div>
<div class="btn" style="left:481.5px;top:154.5px;width:30px;height:12.5px;line-height:10.5px;color:#111;">x^y</div>
<div class="btn" style="left:346.0px;top:170.5px;width:30px;height:12.5px;line-height:10.5px;color:#111;">(</div>
<div class="btn" style="left:379.5px;top:170.5px;width:30px;height:12.5px;line-height:10.5px;color:#111;">)</div>
<div class="dl" style="left:342px;top:188.5px;">Function Library</div>
<div class="hl" style="left:388px;top:193.5px;width:130px;"></div>
<div class="inp" style="left:346px;top:200px;width:79px;height:11px;"></div>
<div class="it" style="left:348px;top:200.5px;">ABS()</div>
<div class="btn" style="left:414.5px;top:201px;width:9.5px;height:9px;border-color:#a9c0e2;"></div>
<div class="btn" style="left:428px;top:199px;width:59.5px;height:12.5px;line-height:10.5px;">Insert</div>
<div class="dl" style="left:342px;top:215px;">Select Operand</div>
<div class="hl" style="left:388px;top:220px;width:130px;"></div>
<div class="btn" style="left:346.0px;top:225px;width:25.5px;height:12.8px;line-height:10.8px;">[ T ]</div>
<div class="btn" style="left:375.5px;top:225px;width:25.5px;height:12.8px;line-height:10.8px;">[ W ]</div>
<div class="btn" style="left:404.0px;top:225px;width:25.5px;height:12.8px;line-height:10.8px;">[ PI ]</div>
<div class="btn" style="left:433.0px;top:225px;width:28.5px;height:12.8px;line-height:10.8px;">Var [A] =</div>
<div class="inp" style="left:464px;top:226px;width:47.5px;height:11px;"></div>
<div class="it" style="left:466px;top:226.5px;">[T]-0.5</div>
<div class="dl" style="left:340.5px;top:254.5px;">Equation Library</div>
<div class="hl" style="left:388px;top:259.5px;width:130px;"></div>
<div class="inp" style="left:341px;top:265.5px;width:170.5px;height:11.5px;"></div>
<div class="it" style="left:343px;top:266.0px;">Ringing square wave</div>
<div class="btn" style="left:500px;top:266.5px;width:10px;height:9.5px;border-color:#a9c0e2;"></div>
<div class="btn" style="left:442.5px;top:280.4px;width:69.5px;height:12.2px;line-height:10.2px;">Update</div>
<svg class="a" style="left:331px;top:64px" width="417" height="299" viewBox="331 64 417 299"><path d="M626.5 95.5 h4 l-2 2.4z M417.5 204.8 h4 l-2 2.4z M503 270.5 h4 l-2 2.4z" fill="#1e3c78"/></svg>
<div class="a" style="left:524.3px;top:143.8px;width:216.2px;height:155px;background:#f1f6fe;"></div><div class="a" style="left:525.5px;top:144.5px;width:214px;height:153.5px;background:#000;"></div>
<svg class="a" style="left:525px;top:144px" width="215" height="154" viewBox="525 144 215 154" fill="none">
<path d="M574.5 153.4 V289.4 M574.5 153.4 H734.8 M590.5 153.4 V289.4 M574.5 167.0 H734.8 M606.6 153.4 V289.4 M574.5 180.6 H734.8 M622.6 153.4 V289.4 M574.5 194.2 H734.8 M638.6 153.4 V289.4 M574.5 207.8 H734.8 M654.6 153.4 V289.4 M574.5 221.4 H734.8 M670.7 153.4 V289.4 M574.5 235.0 H734.8 M686.7 153.4 V289.4 M574.5 248.6 H734.8 M702.7 153.4 V289.4 M574.5 262.2 H734.8 M718.8 153.4 V289.4 M574.5 275.8 H734.8 M734.8 153.4 V289.4 M574.5 289.4 H734.8" stroke="#7c7c7c" stroke-width="1"/>
<path d="M574.5 156.6L574.6 156.8L574.7 157.3L574.8 158.5L574.9 160.1L575.0 162.1L575.2 165.9L575.5 170.5L575.6 172.5L575.7 174.3L575.8 175.6L575.9 176.4L576.1 176.7L576.2 176.5L576.3 175.9L576.4 174.7L576.5 173.2L576.7 170.8L577.1 164.8L577.2 162.5L577.3 161.1L577.5 160.1L577.6 159.6L577.7 159.4L577.8 159.7L577.9 160.5L578.1 161.6L578.2 163.5L578.7 170.2L578.9 172.1L579.0 173.2L579.1 173.9L579.2 174.3L579.3 174.3L579.5 173.9L579.6 173.1L579.7 171.7L580.0 169.4L580.3 165.5L580.4 163.8L580.6 162.5L580.7 161.9L580.8 161.5L581.0 161.5L581.1 161.9L581.2 162.5L581.4 163.7L581.6 166.1L581.9 169.5L582.1 170.9L582.2 171.9L582.4 172.4L582.5 172.5L582.6 172.4L582.8 171.9L582.9 170.9L583.2 168.9L583.5 165.7L583.7 164.2L583.9 163.4L584.0 163.1L584.2 163.1L584.4 163.6L584.6 164.7L584.8 166.8L585.2 169.2L585.4 170.4L585.5 171.0L585.7 171.2L585.8 171.1L586.0 170.4L586.3 169.1L586.8 165.9L587.0 164.9L587.2 164.3L587.3 164.2L587.5 164.5L587.7 165.2L588.0 167.0L588.4 169.0L588.6 169.8L588.8 170.2L589.0 170.2L589.2 169.8L589.4 168.8L590.0 166.1L590.2 165.3L590.4 165.0L590.7 165.1L590.9 165.7L591.3 167.1L591.7 168.7L591.9 169.3L592.1 169.5L592.4 169.2L592.7 168.5L593.3 166.3L593.5 165.8L593.8 165.7L594.1 166.0L594.5 167.2L594.9 168.5L595.2 168.9L595.5 168.9L595.8 168.4L596.5 166.5L596.8 166.1L597.1 166.2L597.5 166.8L598.1 168.2L598.4 168.5L598.7 168.5L599.1 167.8L599.7 166.7L600.1 166.5L600.5 166.7L601.4 168.1L601.8 168.3L602.2 168.0L603.0 166.9L603.4 166.7L603.8 167.0L604.6 168.0L605.1 168.0L605.6 167.6L606.3 167.0L606.8 166.9L607.9 167.9L608.4 167.8L609.5 167.1L610.1 167.1L611.2 167.8L611.8 167.7L612.8 167.1L613.5 167.3L614.5 167.7L615.3 167.5L616.1 167.2L617.8 167.6L619.4 167.3L621.1 167.6L622.7 167.3L624.4 167.5L626.0 167.4L627.7 167.5L629.4 167.4L631.2 167.5L633.0 167.4L654.6 167.4L654.6 286.2L654.7 286.0L654.8 285.5L654.9 284.3L655.1 282.7L655.2 280.7L655.4 276.9L655.6 272.3L655.7 270.3L655.9 268.5L656.0 267.2L656.1 266.4L656.2 266.1L656.3 266.3L656.5 266.9L656.6 268.1L656.7 269.6L656.9 272.0L657.2 278.0L657.4 280.3L657.5 281.7L657.6 282.7L657.7 283.2L657.9 283.4L658.0 283.1L658.1 282.3L658.2 281.2L658.4 279.3L658.9 272.6L659.0 270.7L659.1 269.6L659.3 268.9L659.4 268.5L659.5 268.5L659.6 268.9L659.7 269.7L659.9 271.1L660.1 273.4L660.4 277.3L660.6 279.0L660.7 280.3L660.9 280.9L661.0 281.3L661.1 281.3L661.2 280.9L661.3 280.3L661.5 279.1L661.7 276.7L662.1 273.3L662.2 271.9L662.4 270.9L662.5 270.4L662.6 270.3L662.7 270.4L662.9 270.9L663.1 271.9L663.3 273.9L663.7 277.1L663.9 278.6L664.0 279.4L664.2 279.7L664.3 279.7L664.5 279.2L664.7 278.1L665.0 276.0L665.3 273.6L665.5 272.4L665.7 271.8L665.8 271.6L666.0 271.7L666.2 272.4L666.4 273.7L666.9 276.9L667.1 277.9L667.3 278.5L667.5 278.6L667.7 278.3L667.9 277.6L668.2 275.8L668.6 273.8L668.8 273.0L669.0 272.6L669.2 272.6L669.4 273.0L669.6 274.0L670.2 276.7L670.4 277.5L670.6 277.8L670.8 277.7L671.0 277.1L671.4 275.7L671.8 274.1L672.0 273.5L672.3 273.3L672.5 273.6L672.8 274.3L673.4 276.5L673.7 277.0L673.9 277.1L674.2 276.8L674.6 275.6L675.0 274.3L675.3 273.9L675.6 273.9L675.9 274.4L676.7 276.3L677.0 276.7L677.3 276.6L677.6 276.0L678.3 274.6L678.6 274.3L678.9 274.3L679.3 275.0L679.9 276.1L680.3 276.3L680.6 276.1L681.5 274.7L681.9 274.5L682.3 274.8L683.1 275.9L683.5 276.1L684.0 275.8L684.8 274.8L685.2 274.8L685.8 275.2L686.4 275.8L686.9 275.9L688.1 274.9L688.6 275.0L689.7 275.7L690.2 275.7L691.3 275.0L691.9 275.1L693.0 275.7L693.6 275.5L694.6 275.1L695.4 275.3L696.3 275.6L698.0 275.2L699.6 275.5L701.3 275.2L702.9 275.5L704.5 275.3L706.2 275.4L707.9 275.3L709.6 275.4L711.3 275.3L713.1 275.4L734.8 275.4" stroke="#7ccc6c" stroke-width=".9" stroke-linejoin="round"/>
</svg>
<div class="pv" style="left:574.5px;top:145.5px;">Preview</div>
<div class="pv r" style="left:540px;width:32px;top:154.5px;">1.26</div>
<div class="pv r" style="left:540px;width:32px;top:161.5px;">V</div>
<div class="pv r" style="left:540px;width:32px;top:222.5px;">251.99</div>
<div class="pv r" style="left:540px;width:32px;top:229.5px;">mV/div</div>
<div class="pv r" style="left:540px;width:32px;top:274.8px;">V</div>
<div class="pv r" style="left:540px;width:32px;top:282.3px;">-1.26</div>
<div class="pv" style="left:575px;top:290.5px;">0.000 s</div>
<div class="pv r" style="right:16px;top:290.5px;">50.000 ms</div>
<div class="a" style="left:334.5px;top:307.9px;width:409px;height:25.6px;border:1px solid #b3c9e6;border-radius:2px;box-sizing:border-box;"></div>
<div class="dl" style="left:336.5px;top:302.6px;background:#dfebfd;padding:0 3px 0 1px;">Status</div>
<div class="inp" style="left:335.5px;top:312.5px;width:404px;height:18.5px;border-color:#cfdaea;"></div>
<div class="it" style="left:337.5px;top:311.8px;font-size:6.4px;">Successfully calculated.</div>
<svg class="a" style="left:729px;top:313px" width="10" height="18" viewBox="0 0 10 18"><rect width="10" height="18" fill="#f4f6fa"/><path d="M3 5.5 l2-2.5 2 2.5z M3 12.5 l2 2.5 2-2.5z" fill="#a8aeb8"/></svg>
<div class="dl" style="left:337px;top:339.5px;">Sampling Frequency (Fs) :</div>
<div class="a" style="left:445px;top:340px;width:63.5px;height:8px;background:#fff;"></div>
<div class="it" style="left:446.2px;top:339.5px;color:#a7adb7;">1000000</div>
<div class="dl" style="left:512px;top:339.5px;">Hz</div>
<div class="btn" style="left:631px;top:340px;width:53px;height:12.5px;line-height:10.5px;"><u>O</u>K</div>
<div class="btn" style="left:686px;top:340px;width:53px;height:12.5px;line-height:10.5px;"><u>C</u>ancel</div>
</div></body></html>
